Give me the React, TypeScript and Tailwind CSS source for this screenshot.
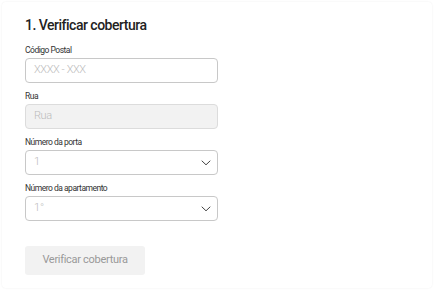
import React from 'react';

const Chevron = () => (
    <svg width="10" height="6" viewBox="0 0 10 6" fill="none" className="shrink-0">
        <path d="M1 1L5 4.8L9 1" stroke="#444" strokeWidth="1" strokeLinecap="round" strokeLinejoin="round" />
    </svg>
);

const Field = ({ label, children }: { label: string; children: React.ReactNode }) => (
    <div className="flex flex-col">
        <label className="text-[8.5px] leading-[10px] tracking-[-0.5px] text-[#333] mb-[3px]">{label}</label>
        {children}
    </div>
);

const App = () => {
    return (
        <div className="w-[434px] h-[290px] bg-white p-[2px] font-['Roboto',sans-serif]">
            <div className="h-full rounded-[4px] bg-white shadow-[0_0_2px_rgba(0,0,0,0.08)] pl-[23px] pt-[14px]">
                <h1 className="text-[14px] leading-[18px] font-medium tracking-[-0.5px] text-[#222]">1. Verificar cobertura</h1>

                <div className="w-[193px] mt-[11px] flex flex-col gap-[8px]">
                    <Field label="Código Postal">
                        <div className="h-[25px] rounded-[4px] border border-[#c8c8c8] px-[8px] flex items-center text-[11px] font-light tracking-[-0.4px] text-[#bbb]">
                            XXXX - XXX
                        </div>
                    </Field>
                    <Field label="Rua">
                        <div className="h-[25px] rounded-[4px] border border-[#dcdcdc] bg-[#f2f2f2] px-[8px] flex items-center text-[11px] font-light tracking-[-0.4px] text-[#bbb]">
                            Rua
                        </div>
                    </Field>
                    <Field label="Número da porta">
                        <div className="h-[25px] rounded-[4px] border border-[#c8c8c8] pl-[8px] pr-[6px] flex items-center justify-between text-[11px] font-light text-[#bbb]">
                            <span>1</span>
                            <Chevron />
                        </div>
                    </Field>
                    <Field label="Número da apartamento">
                        <div className="h-[25px] rounded-[4px] border border-[#c8c8c8] pl-[8px] pr-[6px] flex items-center justify-between text-[11px] font-light text-[#bbb]">
                            <span>1°</span>
                            <Chevron />
                        </div>
                    </Field>
                </div>

                <button className="mt-[25px] w-[120px] h-[29px] rounded-[3px] bg-[#f2f2f2] text-[11px] tracking-[-0.3px] text-[#999]">
                    Verificar cobertura
                </button>
            </div>
        </div>
    );
};

export default App;
